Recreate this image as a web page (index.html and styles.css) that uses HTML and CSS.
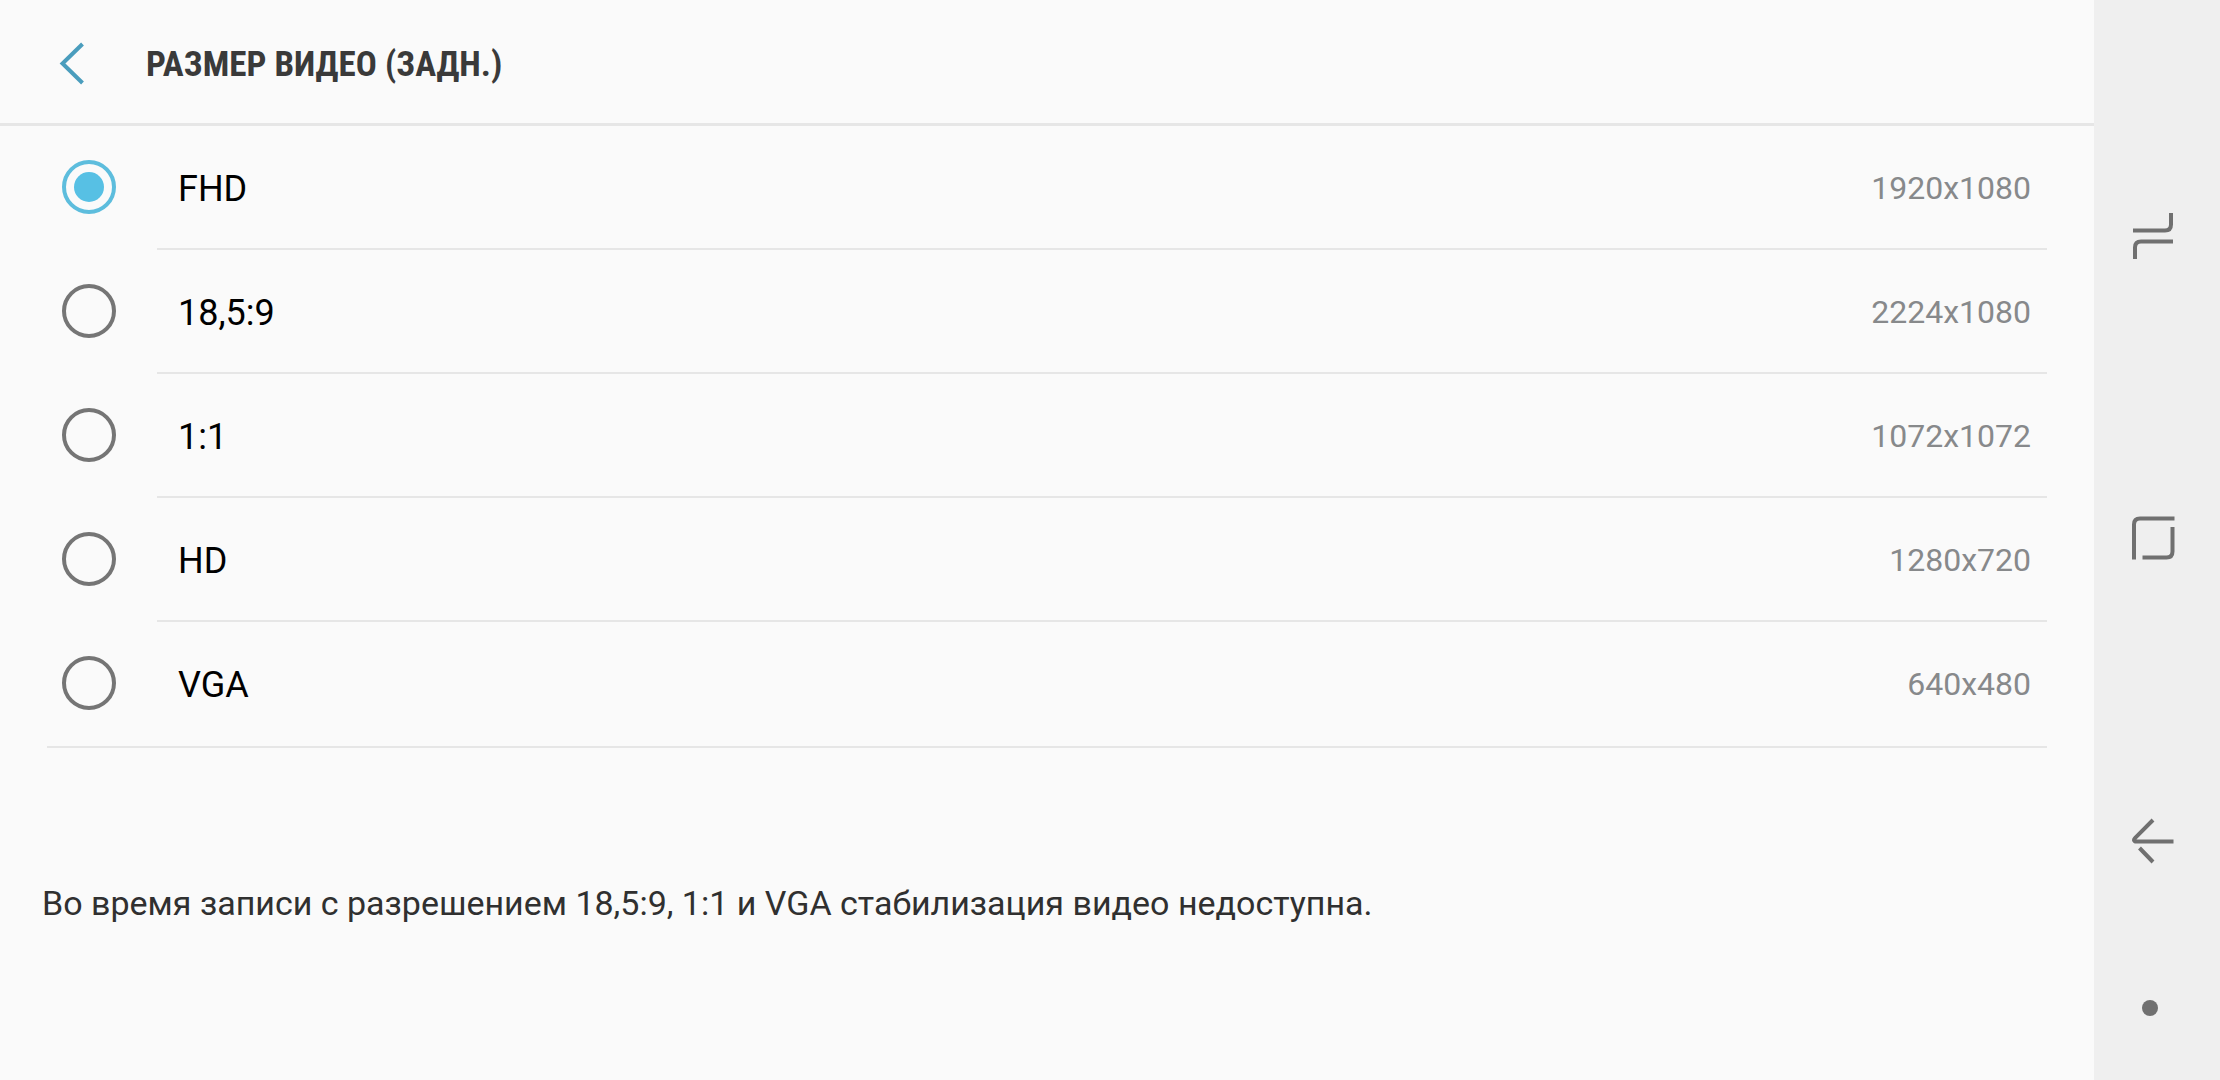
FILE: index.html
```html
<!DOCTYPE html>
<html lang="ru">
<head>
    <meta charset="UTF-8">
    <meta name="viewport" content="width=device-width, initial-scale=1.0">
    <title>Размер видео (задн.)</title>
    <link rel="stylesheet" href="styles.css">
</head>
<body>
    <main class="screen">
        <header class="header">
            <button class="back" type="button" aria-label="Назад">
                <svg width="28" height="44" viewBox="0 0 28 44"><path d="M26.5 2 L6.5 21.5 L26.5 41" fill="none" stroke="#4a9dbd" stroke-width="4"/></svg>
            </button>
            <h1 class="title">РАЗМЕР ВИДЕО (ЗАДН.)</h1>
        </header>

        <form class="options">
            <label class="option">
                <input class="radio" type="radio" name="size" value="fhd" checked>
                <span class="option-body"><span class="name">FHD</span><span class="size">1920x1080</span></span>
            </label>
            <label class="option">
                <input class="radio" type="radio" name="size" value="wide">
                <span class="option-body"><span class="name">18,5:9</span><span class="size">2224x1080</span></span>
            </label>
            <label class="option">
                <input class="radio" type="radio" name="size" value="square">
                <span class="option-body"><span class="name">1:1</span><span class="size">1072x1072</span></span>
            </label>
            <label class="option">
                <input class="radio" type="radio" name="size" value="hd">
                <span class="option-body"><span class="name">HD</span><span class="size">1280x720</span></span>
            </label>
            <label class="option">
                <input class="radio" type="radio" name="size" value="vga">
                <span class="option-body"><span class="name">VGA</span><span class="size">640x480</span></span>
            </label>
            <hr class="end-line">
        </form>

        <p class="note">Во время записи с разрешением 18,5:9, 1:1 и VGA стабилизация видео недоступна.</p>
    </main>

    <nav class="navbar">
        <button class="nav-button" type="button" aria-label="Последние приложения">
            <svg width="48" height="48" viewBox="0 0 48 48"><path d="M4 18.5 H36 Q42 18.5 42 12.5 V1 M6 47 V35.5 Q6 29.5 12 29.5 H44"/></svg>
        </button>
        <button class="nav-button" type="button" aria-label="Главный экран">
            <svg width="48" height="48" viewBox="0 0 48 48"><path d="M5 45.5 V10.5 Q5 4.5 11 4.5 H45.5 M43.5 13 V37.5 Q43.5 43.5 37.5 43.5 H13.5"/></svg>
        </button>
        <button class="nav-button" type="button" aria-label="Назад">
            <svg width="48" height="48" viewBox="0 0 48 48"><path d="M24 3 L6.2 20.8 Q5 22 5 23 Q5.3 24.5 7.5 24.5 H44.5 M10.5 31 L24 45"/></svg>
        </button>
        <button class="dot-button" type="button" aria-label="Скрыть панель"><span class="dot"></span></button>
    </nav>
</body>
</html>
```

FILE: styles.css
```css
* {
    box-sizing: border-box;
}
body {
    display: flex;
    min-height: 100vh;
    margin: 0;
    font-family: Roboto, "Noto Sans", sans-serif;
    background-color: #fafafa;
}
button {
    padding: 0;
    border: none;
    background: none;
    cursor: pointer;
}
svg {
    display: block;
}
.screen {
    flex: 1;
}

/* header */
.header {
    display: flex;
    align-items: center;
    height: 126px;
    padding-left: 56px;
    border-bottom: 3px solid #e6e6e6;
}
.back {
    padding-top: 4px;
}
.title {
    margin: 6px 0 0 62px;
    font-family: "Roboto Condensed", Roboto, sans-serif;
    font-size: 35px;
    font-weight: 700;
    line-height: 44px;
    color: #3a3a3a;
}

/* list of sizes */
.option {
    display: flex;
    align-items: flex-start;
    padding: 0 47px 0 62px;
    cursor: pointer;
}
.radio {
    appearance: none;
    flex: none;
    display: grid;
    place-items: center;
    width: 54px;
    height: 54px;
    margin: 34px 41px 0 0;
    border: 4px solid #757575;
    border-radius: 50%;
}
.radio:checked {
    border-color: #5dbddd;
}
.radio:checked::before {
    content: "";
    width: 30px;
    height: 30px;
    border-radius: 50%;
    background-color: #57c0e4;
}
.option-body {
    flex: 1;
    display: flex;
    align-items: center;
    justify-content: space-between;
    height: 124px;
    padding: 0 16px 0 21px;
    border-bottom: 2px solid #e6e6e6;
}
.option:last-of-type .option-body {
    border-color: transparent;
}
.name {
    padding-top: 4px;
    font-size: 36px;
    color: #000;
}
.size {
    padding-top: 2px;
    font-size: 32px;
    color: #87898b;
}
.end-line {
    height: 2px;
    margin: 0 47px;
    border: none;
    background-color: #e6e6e6;
}
.note {
    margin: 134px 47px 0 42px;
    font-size: 34px;
    line-height: 42px;
    color: #303030;
}

/* system navigation bar */
.navbar {
    display: flex;
    flex-direction: column;
    width: 126px;
    padding-top: 85px;
    background-color: #efefef;
}
.nav-button {
    flex: 1;
    padding-left: 35px;
}
.nav-button path {
    fill: none;
    stroke: #707070;
    stroke-width: 4;
}
.dot-button {
    display: flex;
    height: 88px;
    padding: 8px 0 0 48px;
}
.dot {
    width: 16px;
    height: 16px;
    border-radius: 50%;
    background-color: #707070;
}
```
